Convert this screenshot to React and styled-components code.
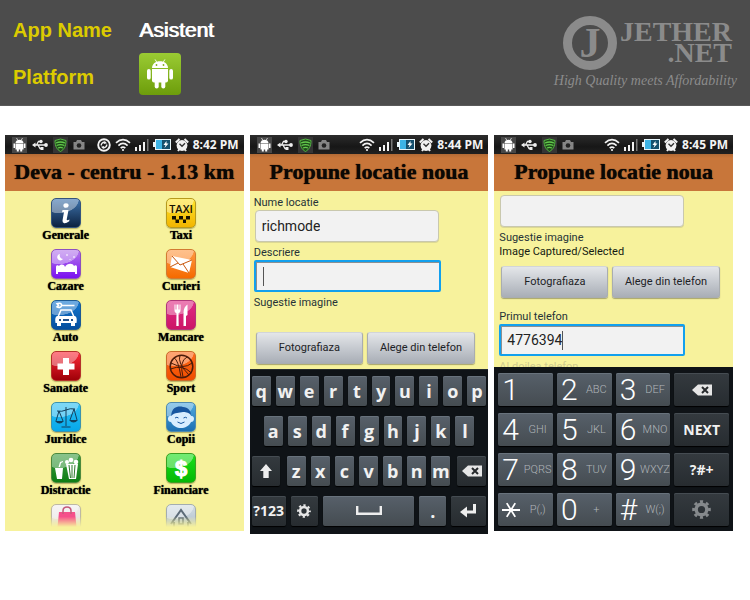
import React from "react";
import styled, { createGlobalStyle } from "styled-components";

const GlobalStyle = createGlobalStyle`
  * { box-sizing: border-box; }
  body { margin: 0; background: #fff; font-family: "Open Sans", "Noto Sans", sans-serif; }
  button, input { font: inherit; margin: 0; padding: 0; border: 0; }
  svg { display: block; flex: none; }
`;

const formFont = `Roboto, "Noto Sans", sans-serif`;

/* ---------- header ---------- */

const Header = styled.header`
  display: flex;
  justify-content: space-between;
  min-height: 106px;
  padding: 10px 13px 1px;
  background: #4c4c4c;
  border-bottom: 1px solid #5a5a5a;
  font-family: "Liberation Sans", Arial, sans-serif;
`;

const Facts = styled.dl`
  display: grid;
  grid-template-columns: 126px auto;
  grid-template-rows: 40px 54px;
  align-items: center;
  margin: 0;
`;

const Term = styled.dt`
  color: #dccb00;
  font-size: 20px;
  font-weight: bold;
  line-height: 24px;
`;

const Detail = styled.dd`
  margin: 0;
  color: #fff;
  font-size: 21px;
  line-height: 24px;
  text-shadow: 1px 0 0 #fff;
`;

const PlatformBadge = styled.span`
  display: flex;
  align-items: center;
  justify-content: center;
  width: 42px;
  height: 42px;
  margin-bottom: 6px;
  border-radius: 4px;
  background: linear-gradient(#9acb33, #6d9d0b);
`;

const Brand = styled.a`
  display: flex;
  flex-direction: column;
  align-items: flex-end;
  padding-top: 6px;
  color: #8b8b8b;
  font-family: "Liberation Serif", "Times New Roman", serif;
  text-decoration: none;
`;

const BrandTop = styled.span`
  display: flex;
  gap: 3px;
  padding-right: 5px;
`;

const BrandRing = styled.span`
  display: flex;
  align-items: center;
  justify-content: center;
  width: 54px;
  height: 54px;
  border: 9px solid #8b8b8b;
  border-radius: 50%;
  font-size: 42px;
  font-weight: bold;
  line-height: 36px;
`;

const BrandName = styled.span`
  padding-top: 5px;
  font-size: 28px;
  font-weight: bold;
  line-height: 21px;
  text-align: right;
`;

const BrandLine = styled.span`
  display: block;
`;

const Tagline = styled.span`
  font-size: 14px;
  font-style: italic;
  line-height: 22px;
`;

/* ---------- phone frame ---------- */

const Gallery = styled.main`
  display: flex;
  align-items: flex-start;
  gap: 6px;
  padding: 29px 17px 20px 5px;
`;

const Phone = styled.section`
  flex: 1 1 0;
  min-width: 0;
  background: #f7f29c;
`;

const StatusBar = styled.div`
  display: flex;
  align-items: center;
  height: 19px;
  padding: 0 5px 0 7px;
  background: linear-gradient(#2c2c2c, #171717 60%, #202020);
  color: #f4f4f4;
`;

const StatusGroup = styled.div`
  display: flex;
  align-items: center;
  gap: ${(p) => (p.$wide ? "5px" : "4px")};
  ${(p) => p.$end && "margin-left: auto;"}
`;

const Clock = styled.time`
  font-size: 12px;
  font-weight: 700;
  line-height: 19px;
  white-space: nowrap;
`;

const TitleBar = styled.h2`
  height: 37px;
  margin: 0;
  background: linear-gradient(#b26a35, #c8763a 4px);
  color: #0b0704;
  font-family: "Liberation Serif", "Times New Roman", serif;
  font-size: 22px;
  font-weight: bold;
  line-height: 35px;
  text-align: center;
  text-shadow: 0 0 1px #0b0704;
  white-space: nowrap;
`;

/* ---------- category list ---------- */

const Categories = styled.div`
  display: grid;
  grid-template-columns: 1fr 1fr;
  padding: 7px 5px 4px 3px;
`;

const Category = styled.a`
  display: flex;
  flex-direction: column;
  align-items: center;
  height: ${(p) => (p.$cut ? "23px" : "51px")};
  overflow: hidden;
  color: #000;
  text-decoration: none;
  ${(p) => p.$cut && "mask-image: linear-gradient(#000 55%, transparent);"}
`;

const CategoryName = styled.span`
  font-family: "Liberation Serif", "Times New Roman", serif;
  font-size: 12px;
  font-weight: bold;
  line-height: 14px;
  text-shadow: 0 0 1px #000;
`;

const Tile = styled.span`
  flex: none;
  width: 30px;
  height: 30px;
  border: 1px solid ${(p) => p.$edge};
  border-radius: 5px;
  background: radial-gradient(ellipse 120% 85% at 25% 0, rgba(255, 255, 255, 0.38) 0 58%, transparent 60%),
    linear-gradient(${(p) => p.$from}, ${(p) => p.$to});
  box-shadow: 0 1px 1px rgba(90, 80, 20, 0.4);
`;

/* ---------- forms ---------- */

const Form = styled.form`
  display: flex;
  flex-direction: column;
  height: ${(p) => p.$height};
  overflow: hidden;
  padding: ${(p) => p.$pad};
`;

const Caption = styled.label`
  display: block;
  flex: none;
  margin-top: ${(p) => (p.$after ? "4px" : "0")};
  color: ${(p) => (p.$dark ? "#141a10" : p.$faded ? "#cfcb8e" : "#263238")};
  font-family: ${formFont};
  font-size: 11px;
  line-height: 14px;
  white-space: nowrap;
`;

const Field = styled.div`
  display: flex;
  flex: none;
  align-items: center;
  width: ${(p) => (p.$focus ? "81%" : "80%")};
  height: 32px;
  margin: ${(p) => (p.$focus ? "0" : "0 0 4px 1px")};
  padding: 0 0 0 6px;
  border: ${(p) => (p.$focus ? "2px solid #12a0ee" : "1px solid #c9c8ae")};
  border-radius: ${(p) => (p.$focus ? "2px" : "4px")};
  background: #f2f2f2;
  box-shadow: ${(p) => (p.$focus ? "inset 1px 1px 0 #8b8f92" : "0 1px 0 #dcd893")};
`;

const TextInput = styled.input`
  field-sizing: content;
  max-width: 100%;
  background: transparent;
  outline: none;
  color: #222;
  font-family: ${formFont};
  font-size: 14px;
  line-height: 20px;
`;

const Caret = styled.span`
  width: 1px;
  height: 19px;
  background: #555;
`;

const Actions = styled.div`
  display: grid;
  flex: none;
  grid-template-columns: 1fr 1fr;
  gap: 4px;
  width: 95%;
  margin: ${(p) => p.$margin};
`;

const ActionButton = styled.button`
  height: 32px;
  border: 1px solid #a9adb0;
  border-top-color: #d2d5d8;
  border-radius: 3px;
  background: linear-gradient(#e4e6e9, #c6cad0 50%, #a9aeb6);
  box-shadow: 0 1px 1px rgba(90, 90, 60, 0.5);
  color: #1d2226;
  font-family: ${formFont};
  font-size: 11px;
  line-height: 30px;
  white-space: nowrap;
`;

/* ---------- keyboards ---------- */

const Keyboard = styled.div`
  display: flex;
  flex-direction: column;
  gap: 10px;
  padding: 6px 2px 8px;
  border-top: 1px solid #252b31;
  background: #0f1317;
`;

const KeyRow = styled.div`
  display: flex;
  gap: 5px;
  padding: 0 ${(p) => p.$inset || "0"};
`;

const KeyGroup = styled.div`
  display: flex;
  flex: 1;
  gap: 5px;
  padding: 0 2px;
`;

const Key = styled.button`
  display: flex;
  flex: ${(p) => (p.$w ? `0 0 ${p.$w}` : "1 1 0")};
  align-items: center;
  justify-content: center;
  min-width: 0;
  height: ${(p) => (p.$tall ? "33px" : "30px")};
  border-radius: 2px;
  background: ${(p) =>
    p.$dark ? "linear-gradient(#343a3f, #272c30)" : "linear-gradient(#57606a, #454c51)"};
  box-shadow: inset 0 1px 0 ${(p) => (p.$dark ? "#454c52" : "#68727c")}, 0 1px 1px #000;
  color: #f1f1f1;
  font-size: ${(p) => (p.$word ? "14px" : "18px")};
  font-weight: 700;
  line-height: 28px;
`;

const Keypad = styled.div`
  display: grid;
  grid-template-columns: repeat(4, 1fr);
  gap: 7px 4px;
  padding: 6px 4px 5px;
  background: #0f1317;
`;

const DigitKey = styled(Key)`
  justify-content: flex-start;
  padding-left: 4px;
  font-family: Roboto, sans-serif;
  font-weight: 300;
`;

const Digit = styled.span`
  width: 20px;
  color: #fff;
  font-size: 30px;
  line-height: 32px;
  text-align: left;
`;

const Letters = styled.span`
  flex: 1;
  color: #b0b5b9;
  font-size: 11px;
  text-align: center;
`;

/* ---------- drawings ---------- */

const Robot = ({ size = 26 }) => (
  <svg width={size} height={(size * 30) / 26} viewBox="0 0 26 30" fill="#fff" aria-hidden="true">
    <path d="M5 9C5.200 5 8.500 2.300 13 2.300S20.800 5 21 9z" />
    <path d="M8.300.800 10 3.500M17.700.800 16 3.500" stroke="#fff" strokeWidth=".9" strokeLinecap="round" />
    <circle cx="9.500" cy="6" r=".9" fill="#81b01c" />
    <circle cx="16.500" cy="6" r=".9" fill="#81b01c" />
    <path d="M5 10h16v11.500a2 2 0 0 1-2 2H7a2 2 0 0 1-2-2z" />
    <rect x="0" y="10" width="3.700" height="10.500" rx="1.850" />
    <rect x="22.300" y="10" width="3.700" height="10.500" rx="1.850" />
    <rect x="7.700" y="20" width="4" height="9.500" rx="2" />
    <rect x="14.300" y="20" width="4" height="9.500" rx="2" />
  </svg>
);

const SmallRobot = () => (
  <svg width="15" height="16" viewBox="0 0 15 16" aria-hidden="true">
    <rect width="15" height="16" fill="#474747" />
    <g fill="#fff">
      <path d="M3.500 6C3.500 1.500 11.500 1.500 11.500 6zM3.500 6.600h8v6h-8zM1.500 6.500H3v4.500H1.500zM12 6.500h1.500V11H12zM4.800 12h2v2.500h-2zM8.200 12h2v2.500h-2z" />
      <path d="m4.500 1 1.200 2M10.500 1 9.300 3" stroke="#fff" strokeWidth=".7" />
    </g>
  </svg>
);

const Usb = () => (
  <svg width="16" height="12" viewBox="0 0 16 12" fill="none" stroke="#eee" strokeWidth="1.300" aria-hidden="true">
    <path d="M2 6h12M4.500 6l2-3.500H9M6 6l2 3.500h2" />
    <path d="m0 6 3.500-2.500v5z" fill="#eee" stroke="none" />
    <circle cx="14" cy="6" r="1.900" fill="#eee" stroke="none" />
    <circle cx="9" cy="2.500" r="1.700" fill="#eee" stroke="none" />
    <path d="M8.500 8h3v3h-3z" fill="#eee" stroke="none" />
  </svg>
);

const Shield = () => (
  <svg width="15" height="16" viewBox="0 0 15 16" aria-hidden="true">
    <rect width="15" height="16" fill="#353535" />
    <path d="M2 3.500Q7.500.500 13 3.500C13 9.500 11 12.500 7.500 14.500 4 12.500 2 9.500 2 3.500z" fill="#1f4a1a" stroke="#55b944" />
    <path d="M3 6q4.500-2 9 0M3.600 8.500q4-1.800 7.800 0M5 11q2.500-1.200 5 0" stroke="#63c94c" strokeWidth="1.300" fill="none" />
  </svg>
);

const Camera = () => (
  <svg width="12" height="11" viewBox="0 0 12 11" aria-hidden="true">
    <path d="M.5 3H3l1-2h4l1 2h2.500v7.500H.5z" fill="#858585" />
    <circle cx="6" cy="6.500" r="2.300" fill="#222" />
  </svg>
);

const Sync = () => (
  <svg width="14" height="14" viewBox="0 0 14 14" fill="none" stroke="#f2f2f2" aria-hidden="true">
    <circle cx="7" cy="7" r="5.800" strokeWidth="1.900" />
    <path d="M4.300 7.500A2.700 2.700 0 0 1 8 4.600M9.700 6.500A2.700 2.700 0 0 1 6 9.400" strokeWidth="1.500" />
    <path d="M7.500 2.800 10 5.200 7 6zM6.500 11.200 4 8.800 7 8z" fill="#f2f2f2" stroke="none" />
  </svg>
);

const Wifi = () => (
  <svg width="16" height="14" viewBox="0 0 16 14" fill="none" stroke="#f2f2f2" strokeWidth="1.700" aria-hidden="true">
    <path d="M1 4.800Q8-1.600 15 4.800" />
    <path d="M3.400 7.600Q8 3.200 12.600 7.600" />
    <path d="M5.700 10.200Q8 8 10.300 10.200" />
    <circle cx="8" cy="12" r="1.100" fill="#f2f2f2" stroke="none" />
  </svg>
);

const Signal = () => (
  <svg width="14" height="13" viewBox="0 0 14 13" aria-hidden="true">
    <path d="M0 9h2v4H0zM4 7h2v6H4zM8 4h2v9H8z" fill="#f2f2f2" />
    <path d="M12 1h1.500v12H12z" fill="#777" />
  </svg>
);

const Battery = () => (
  <svg width="18" height="13" viewBox="0 0 18 13" aria-hidden="true">
    <path d="M0 4h2V1h16v11H2V9H0z" fill="#e9f6fb" />
    <path d="M3 2h6v9H3z" fill="#3db4e6" />
    <path d="M9 2h8v9H9z" fill="#15506e" />
    <path d="m13.500 3-3 4h2L11.500 10l4-4.500h-2z" fill="#fff" />
  </svg>
);

const Alarm = () => (
  <svg width="14" height="14" viewBox="0 0 14 14" aria-hidden="true">
    <path d="M.8 4.500 4.500 1M13.200 4.500 9.500 1M3 13l1.500-2M11 13l-1.500-2" stroke="#f2f2f2" strokeWidth="2" />
    <circle cx="7" cy="7.500" r="5.400" fill="#f2f2f2" />
    <path d="m4.500 5.800 2.500 2.400 3-3" fill="none" stroke="#333" strokeWidth="1.400" />
  </svg>
);

const Shift = () => (
  <svg width="14" height="16" viewBox="0 0 14 16" fill="#eee" aria-hidden="true">
    <path d="M7 1 13 8H9.700v7H4.300V8H1z" />
  </svg>
);

const Backspace = () => (
  <svg width="20" height="12" viewBox="0 0 20 12" aria-hidden="true">
    <path d="M0 6 6 .500h14v11H6z" fill="#e6e6e6" />
    <path d="m10 3 6 6M16 3l-6 6" stroke="#26292c" strokeWidth="2" />
  </svg>
);

const Gear = ({ size = 14, color = "#e6e6e6" }) => (
  <svg width={size} height={size} viewBox="0 0 20 20" fill="none" stroke={color} aria-hidden="true">
    <circle cx="10" cy="10" r="5.600" strokeWidth="3.600" />
    <circle cx="10" cy="10" r="8.300" strokeWidth="3" pathLength="16" strokeDasharray="1 1" strokeDashoffset=".5" />
  </svg>
);

const Space = () => (
  <svg width="26" height="10" viewBox="0 0 26 10" fill="none" stroke="#eee" strokeWidth="2.400" aria-hidden="true">
    <path d="M1.200 0v7.800h23.600V0" />
  </svg>
);

const Enter = () => (
  <svg width="17" height="14" viewBox="0 0 17 14" aria-hidden="true">
    <path d="M14.500 0v8H6" fill="none" stroke="#eee" strokeWidth="3" />
    <path d="M0 8 7 2.500v11z" fill="#eee" />
  </svg>
);

const art = {
  info: (
    <g fill="#fff">
      <ellipse cx="14" cy="6.500" rx="2.600" ry="2.300" />
      <path d="M10.500 11h6l-1.800 9.500q0 1.500 2.800 0l-.3 1.700q-3 2.300-5 2t-1.700-2.700l1.500-8.500-2 .2z" />
    </g>
  ),
  taxi: (
    <g fill="#171300">
      <text x="14" y="14" textAnchor="middle" fontFamily="Open Sans, sans-serif" fontSize="11" fontWeight="600">TAXI</text>
      <path d="M5 17h4v3.500H5zM12 17h4v3.500h-4zM19 17h4v3.500h-4zM8.500 20.500H12V24H8.500zM16 20.500h3V24h-3z" />
    </g>
  ),
  bed: (
    <g fill="#fff">
      <path d="M4 24v-7c0-2 2-2.500 3-1 2-2 5-2 6 1 2-4 8-4 9-1 1-1 3-1 3 1v7h-2v-2H6v2z" />
      <path d="M8 4a3.200 3.200 0 1 0 3 5A3.500 3.500 0 0 1 8 4zM15 4l1 1-1 1-1-1zM22 6l1 1-1 1-1-1zM18 9l.6.600-.6.600-.6-.6z" />
    </g>
  ),
  mail: (
    <g>
      <path d="m5 6 20 4-3 13-19-6z" fill="#fff" />
      <path d="m5 6 8 9 12-5M3 17l8-4M22 23l-6-9" fill="none" stroke="#c8560b" />
    </g>
  ),
  car: (
    <g>
      <path d="M10 4.500h12.500M5 2.800c3-1.500 5 .2 4.500 2s-3 2-4.500 1l1.500-1.500z" fill="none" stroke="#fff" strokeWidth="1.600" />
      <path d="m6 16 3-7h10l3 7z" fill="none" stroke="#fff" strokeWidth="1.500" />
      <path d="M5 15h18c2 1 2 4 1.500 7H23v3h-4v-3H9v3H5v-3H3.500C3 19 3 16 5 15z" fill="#fff" />
      <path d="M7 18h2v2H7zM19 18h2v2h-2zM11 18h6v2h-6z" fill="#24528a" />
    </g>
  ),
  food: (
    <g fill="#fff">
      <path d="M7.500 3.500v6c0 2 1.500 2.500 2 3L9.300 25h2.400l-.2-12.500c.5-.5 2-1 2-3v-6h-1v5h-1v-5h-2v5h-1v-5zM16.500 25V12c0-4 1.500-7 4-8.500V14l-1.500 1v10z" />
    </g>
  ),
  cross: <path d="M11 6h6v5.500h5.500v6H17V23h-6v-5.500H5.500v-6H11z" fill="#fff" />,
  ball: (
    <g fill="none" stroke="#4b1b09" strokeWidth="1.500">
      <circle cx="14.500" cy="14.500" r="11.300" />
      <path d="M4 11q13 7 21 0M3.500 17q12-5 21 4M7 6q4 1 7 19M13 3q-3 8 9 20M20 5q-8 4-4 20" strokeWidth="1" />
    </g>
  ),
  scales: (
    <g fill="none" stroke="#12415f" strokeWidth="1">
      <path d="M14 4v19M9.500 24h9M5 8q5 1 9-1t9-1M7 8l-3 10M7 8l4 10M22 6l-4 11M22 6l3 11" />
      <path d="M3 18h9q-4.500 5-9 0zM17 17h9q-4.500 5-9 0z" fill="#12415f" stroke="none" />
    </g>
  ),
  child: (
    <g>
      <path d="M4 13Q5 6 14 6t10 7c4-1 4 6 0 6-2 4-6 6-10 6s-8-2-10-6c-4 0-4-7 0-6z" fill="#d8edff" />
      <path d="M4 13C5 3 12 3 16 4c5 0 8 4 8 8-3-3-6-3-8-3-4 1-8 0-12 4z" fill="#1756a0" />
      <path d="M8 15q2-1.500 3.500 0M16.500 15q2-1.500 3.500 0M10.500 19q3.500 3 7 0" fill="none" stroke="#1756a0" />
    </g>
  ),
  snack: (
    <g fill="#fff">
      <path d="M3 14h8l-1 11H5zM6.500 13 8 8l3-1v1L9 9l-1 4zM14 10h12l-2 15h-7z" />
      <circle cx="15" cy="8" r="2" /><circle cx="19" cy="6" r="2.300" /><circle cx="24" cy="8" r="2.300" />
      <path d="m17 11 1.500 13M20 11v13M23 11l-1 13" stroke="#2c792c" />
    </g>
  ),
  money: (
    <text x="14" y="22" textAnchor="middle" fontFamily="Liberation Sans, sans-serif" fontSize="22" fontWeight="bold" fill="#fff" stroke="#fff">$</text>
  ),
  bag: (
    <g>
      <path d="M7 7h16l2 20H5z" fill="#f5508b" />
      <path d="M11 9V6q0-4 4-4t4 4v3" fill="none" stroke="#c55b7c" strokeWidth="1.500" />
    </g>
  ),
  house: (
    <g fill="none" stroke="#5c6b78" strokeWidth="2">
      <path d="M4 19 14 5l10 14M7 17v10h14V17" />
      <path d="M12 13h4v6h-4z" strokeWidth="1.500" />
    </g>
  ),
};

const categories = [
  ["Generale", "info", "#3f74ae", "#0c2240", "#35557d"],
  ["Taxi", "taxi", "#ffe52e", "#f2b500", "#b79a1c"],
  ["Cazare", "bed", "#b57bea", "#7a10f0", "#8d50bf"],
  ["Curieri", "mail", "#ff9b45", "#f56a00", "#d27b32"],
  ["Auto", "car", "#1277d0", "#064f9e", "#1c5a94"],
  ["Mancare", "food", "#e02b85", "#cc1566", "#b0377a"],
  ["Sanatate", "cross", "#ff2a38", "#9e0008", "#b5322a"],
  ["Sport", "ball", "#ff6d1c", "#f04d00", "#c96a2a"],
  ["Juridice", "scales", "#2cc0f2", "#06a8ea", "#3b93ae"],
  ["Copii", "child", "#51abe0", "#1d6fb2", "#4f8bae"],
  ["Distractie", "snack", "#3f9e42", "#0e7d14", "#4c8a3d"],
  ["Financiare", "money", "#1be01b", "#04b804", "#3ca023"],
  ["", "bag", "#f1eeee", "#dcd6d6", "#bdb8a4"],
  ["", "house", "#d3dde4", "#a9b8c4", "#a3adb0"],
];

const digits = [
  ["1", ""], ["2", "ABC"], ["3", "DEF"], "back",
  ["4", "GHI"], ["5", "JKL"], ["6", "MNO"], "NEXT",
  ["7", "PQRS"], ["8", "TUV"], ["9", "WXYZ"], "?#+",
  ["*", "P(,)"], ["0", "+"], ["#", "W(;)"], "gear",
];

const Star = () => (
  <svg width="18" height="18" viewBox="0 0 17 17" stroke="#fff" strokeWidth="1.700" aria-hidden="true">
    <path d="M0 8.500h17M4.500 2l8 13M12.500 2l-8 13" />
  </svg>
);

const specialFace = {
  back: <Backspace />,
  gear: <Gear size={19} color="#85898c" />,
};

function Status({ time, sync }) {
  return (
    <StatusBar>
      <StatusGroup $wide>
        <SmallRobot />
        <Usb />
        <Shield />
        <Camera />
      </StatusGroup>
      <StatusGroup $end>
        {sync && <Sync />}
        <Wifi />
        <Signal />
        <Battery />
        <Alarm />
        <Clock>{time}</Clock>
      </StatusGroup>
    </StatusBar>
  );
}

function InputField({ id, value, focus, label }) {
  return (
    <Field $focus={focus}>
      <TextInput id={id} aria-label={label} defaultValue={value} />
      {focus && <Caret />}
    </Field>
  );
}

function PhotoActions({ margin }) {
  return (
    <Actions $margin={margin}>
      <ActionButton type="button">Fotografiaza</ActionButton>
      <ActionButton type="button">Alege din telefon</ActionButton>
    </Actions>
  );
}

const keys = (letters) => letters.split("").map((c) => <Key key={c}>{c}</Key>);

export default function App() {
  return (
    <>
      <GlobalStyle />
      <Header>
        <Facts>
          <Term>App Name</Term>
          <Detail>Asistent</Detail>
          <Term>Platform</Term>
          <Detail>
            <PlatformBadge role="img" aria-label="Android">
              <Robot />
            </PlatformBadge>
          </Detail>
        </Facts>
        <Brand href="#">
          <BrandTop>
            <BrandRing>J</BrandRing>
            <BrandName>
              <BrandLine>JETHER</BrandLine>
              <BrandLine>.NET</BrandLine>
            </BrandName>
          </BrandTop>
          <Tagline>High Quality meets Affordability</Tagline>
        </Brand>
      </Header>

      <Gallery>
        <Phone>
          <Status time="8:42 PM" sync />
          <TitleBar>Deva - centru - 1.13 km</TitleBar>
          <Categories>
            {categories.map(([name, icon, from, to, edge]) => (
              <Category key={icon} href="#" $cut={!name} aria-label={name || icon}>
                <Tile $from={from} $to={to} $edge={edge}>
                  <svg width="28" height="28" viewBox="0 0 28 28" aria-hidden="true">{art[icon]}</svg>
                </Tile>
                {name && <CategoryName>{name}</CategoryName>}
              </Category>
            ))}
          </Categories>
        </Phone>

        <Phone>
          <Status time="8:44 PM" />
          <TitleBar>Propune locatie noua</TitleBar>
          <Form $height="178px" $pad="5px 4px 0">
            <Caption htmlFor="name">Nume locatie</Caption>
            <InputField id="name" value="richmode" />
            <Caption htmlFor="about">Descriere</Caption>
            <InputField id="about" value="" focus />
            <Caption as="span" $after>Sugestie imagine</Caption>
            <PhotoActions margin="22px 0 0 2px" />
          </Form>
          <Keyboard>
            <KeyRow>{keys("qwertyuiop")}</KeyRow>
            <KeyRow $inset="12px">{keys("asdfghjkl")}</KeyRow>
            <KeyRow>
              <Key $dark $w="28px" aria-label="Shift"><Shift /></Key>
              <KeyGroup>{keys("zxcvbnm")}</KeyGroup>
              <Key $dark $w="29px" aria-label="Backspace"><Backspace /></Key>
            </KeyRow>
            <KeyRow>
              <Key $dark $word $w="34px">?123</Key>
              <Key $dark $w="27px" aria-label="Settings"><Gear /></Key>
              <Key aria-label="Space"><Space /></Key>
              <Key $w="27px">.</Key>
              <Key $dark $w="35px" aria-label="Enter"><Enter /></Key>
            </KeyRow>
          </Keyboard>
        </Phone>

        <Phone>
          <Status time="8:45 PM" />
          <TitleBar>Propune locatie noua</TitleBar>
          <Form $height="176px" $pad="4px 4px 0 5px">
            <InputField id="extra" value="" label="Descriere" />
            <Caption as="span">Sugestie imagine</Caption>
            <Caption as="span" $dark>Image Captured/Selected</Caption>
            <PhotoActions margin="7px 0 12px 2px" />
            <Caption htmlFor="phone">Primul telefon</Caption>
            <InputField id="phone" value="4776394" focus />
            <Caption as="span" $faded $after>Al doilea telefon</Caption>
          </Form>
          <Keypad>
            {digits.map((d) =>
              Array.isArray(d) ? (
                <DigitKey $tall key={d[0]}>
                  <Digit>{d[0] === "*" ? <Star /> : d[0]}</Digit>
                  <Letters>{d[1]}</Letters>
                </DigitKey>
              ) : (
                <Key $tall $dark $word key={d} aria-label={d}>{specialFace[d] || d}</Key>
              )
            )}
          </Keypad>
        </Phone>
      </Gallery>
    </>
  );
}
